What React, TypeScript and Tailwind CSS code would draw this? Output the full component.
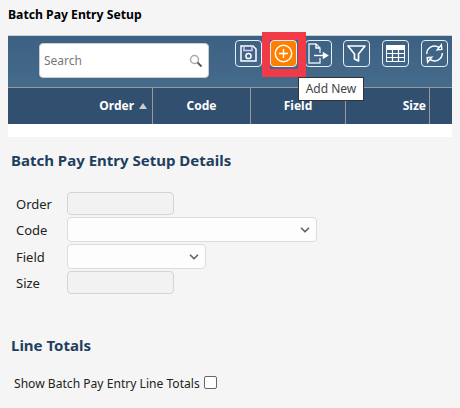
import { ChevronDown } from 'lucide-react'

const font = { fontFamily: '"Noto Sans", "Open Sans", sans-serif' }

function ToolButton({ children, className = '' }: { children: React.ReactNode; className?: string }) {
  return (
    <div className={`w-[27px] h-[27px] rounded-[4px] border border-[#e8eef3] flex items-center justify-center text-white ${className}`}>
      {children}
    </div>
  )
}

function SaveIcon() {
  return (
    <svg width="19" height="19" viewBox="0 0 19 19" fill="none" stroke="white" strokeWidth="1.5">
      <path d="M2 2h12l3 3v12H2z" />
      <path d="M5 2v4.5h8V2" stroke="#d8c8ee" />
      <circle cx="9.5" cy="12" r="2.6" />
    </svg>
  )
}

function AddIcon() {
  return (
    <svg width="21" height="21" viewBox="0 0 21 21" fill="none" stroke="white" strokeWidth="1.5">
      <circle cx="10.5" cy="10.5" r="8.2" />
      <path d="M10.5 6v9M6 10.5h9" />
    </svg>
  )
}

function ExportIcon() {
  return (
    <svg width="23" height="23" viewBox="0 0 23 23" fill="none" stroke="white" strokeWidth="1.4">
      <path d="M13 16v5H2V2h7l4 4v5" stroke="#dfe8f0" />
      <path d="M9 2v4h4" />
      <path d="M7 13.5h10" />
      <path d="M16.5 11l4 2.5-4 2.5z" fill="white" />
    </svg>
  )
}

function FilterIcon() {
  return (
    <svg width="21" height="21" viewBox="0 0 21 21" fill="none" stroke="white" strokeWidth="1.7" strokeLinejoin="round">
      <path d="M2 3h17l-6.5 8v7l-4-2v-5z" />
    </svg>
  )
}

function GridIcon() {
  return (
    <svg width="19" height="17" viewBox="0 0 19 17" fill="none" stroke="white">
      <rect x="0.5" y="0.5" width="18" height="16" strokeWidth="1" />
      <rect x="0.5" y="0.5" width="18" height="4" fill="white" strokeWidth="1" />
      <path d="M0 8.5h19M0 12.5h19M6.5 4v13M12.5 4v13" strokeWidth="1.2" />
    </svg>
  )
}

function RefreshIcon() {
  return (
    <svg width="21" height="21" viewBox="0 0 23 23" fill="none" stroke="white" strokeWidth="1.6">
      <path d="M3 12a8.5 8.5 0 0 1 13.5-7" />
      <path d="M20 11a8.5 8.5 0 0 1-13.5 7" />
      <path d="M14.5 7.5l5-.5-.5-5z" />
      <path d="M8.5 15.5l-5 .5.5 5z" />
    </svg>
  )
}

function Row({ label, children }: { label: string; children: React.ReactNode }) {
  return (
    <div className="flex items-center">
      <span className="w-[51px] pt-[2px] text-[13px] text-[#222]">{label}</span>
      {children}
    </div>
  )
}

function FakeSelect({ width }: { width: string }) {
  return (
    <div className={`${width} h-[25px] bg-[#fdfdfd] border border-[#dcdcdc] rounded-[4px] flex items-center justify-end pr-[4px]`}>
      <ChevronDown size={14} strokeWidth={3} className="text-[#666]" />
    </div>
  )
}

export default function App() {
  return (
    <div style={font} className="w-[460px] h-[408px] bg-[#f5f5f5] overflow-hidden relative">
      <h1 className="pl-[8px] pt-[6px] h-[35px] text-[12.2px] font-bold text-black leading-[18px]">Batch Pay Entry Setup</h1>

      <div className="ml-[8px] w-[444px] h-[102px] bg-white">
        <div className="h-[52px] bg-gradient-to-b from-[#3d6183] to-[#446a8c] flex border-t border-[#c8d0d8] pt-[4px]">
          <div className="ml-[31px] mt-[3px] w-[170px] h-[35px] bg-white rounded-[4px] border border-[#ccc] flex items-center justify-between pl-[4px] pr-[5px]">
            <span className="text-[12px] text-[#777]">Search</span>
            <svg width="14" height="14" viewBox="0 0 14 14" fill="none">
              <circle cx="5.5" cy="5.5" r="4" stroke="#aaa" strokeWidth="1.5" />
              <path d="M8.5 8.5l4 4" stroke="#555" strokeWidth="1.8" />
            </svg>
          </div>
          <div className="ml-[26px] flex">
            <ToolButton><SaveIcon /></ToolButton>
            <ToolButton className="ml-[8px] bg-[#ff8000] relative">
              <AddIcon />
              <div className="absolute left-[-9px] top-[-9px] w-[44px] h-[45px] border-[8px] border-[#f03a47]" />
              <div className="absolute left-[27px] top-[36px] w-[66px] h-[24px] bg-white border border-[#333] flex items-center justify-center text-[12px] text-[#444] whitespace-nowrap z-10">Add New</div>
            </ToolButton>
            <ToolButton className="ml-[8px]"><ExportIcon /></ToolButton>
            <ToolButton className="ml-[11px]"><FilterIcon /></ToolButton>
            <ToolButton className="ml-[12px]"><GridIcon /></ToolButton>
            <ToolButton className="ml-[12px]"><RefreshIcon /></ToolButton>
          </div>
        </div>
        <div className="h-[37px] bg-[#315070] flex border-t border-[#9a9a9a] text-white text-[12px] font-bold">
          <div className="w-[145px] border-r border-[#9a9a9a] flex items-center justify-end pr-[5px] gap-[5px]">
            <span>Order</span>
            <svg width="8" height="6" viewBox="0 0 8 6"><path d="M4 0l4 6H0z" fill="#ccc" /></svg>
          </div>
          <div className="w-[98px] border-r border-[#9a9a9a] flex items-center justify-center">Code</div>
          <div className="w-[95px] border-r border-[#9a9a9a] flex items-center justify-center">Field</div>
          <div className="w-[84px] border-r border-[#9a9a9a] flex items-center justify-end pr-[3px]">Size</div>
          <div className="flex-1" />
        </div>
      </div>

      <h2 className="pl-[11px] mt-[13px] text-[15px] leading-[20px] font-bold text-[#1f3f5f]">Batch Pay Entry Setup Details</h2>

      <div className="pl-[16px] mt-[22px] flex flex-col gap-[2px]">
        <Row label="Order"><div className="w-[107px] h-[23px] bg-[#f2f2f2] border border-[#d4d4d4] rounded-[4px]" /></Row>
        <Row label="Code"><FakeSelect width="w-[250px]" /></Row>
        <Row label="Field"><FakeSelect width="w-[139px]" /></Row>
        <Row label="Size"><div className="w-[107px] h-[23px] bg-[#f2f2f2] border border-[#d4d4d4] rounded-[4px]" /></Row>
      </div>

      <h2 className="pl-[11px] mt-[41px] text-[15px] leading-[20px] font-bold text-[#1f3f5f]">Line Totals</h2>

      <div className="pl-[14px] mt-[20px] flex items-center gap-[4px] text-[12.1px] text-[#222]">
        <span>Show Batch Pay Entry Line Totals</span>
        <div className="w-[13px] h-[13px] bg-white border border-[#666] rounded-[2px] mt-[-4px]" />
      </div>
    </div>
  )
}
